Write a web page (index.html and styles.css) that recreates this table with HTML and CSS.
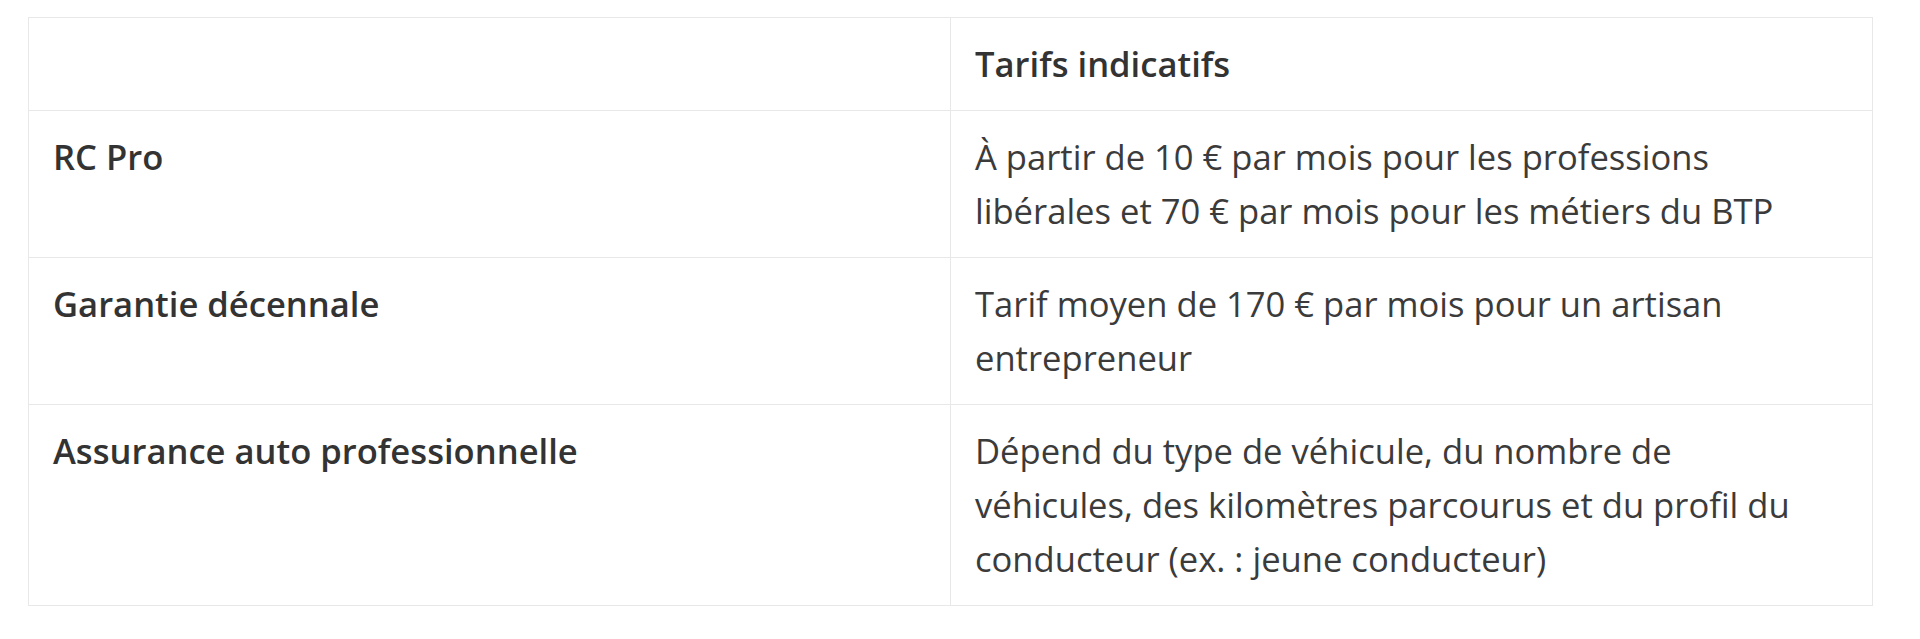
FILE: index.html
```html
<!DOCTYPE html>
<html lang="fr">
<head>
<meta charset="utf-8">
<title>Tarifs indicatifs</title>
<link rel="stylesheet" href="styles.css">
</head>
<body>
<div class="page">
  <table class="tarifs">
    <thead>
      <tr>
        <th></th>
        <th>Tarifs indicatifs</th>
      </tr>
    </thead>
    <tbody>
      <tr>
        <td class="label">RC Pro</td>
        <td>À partir de 10 € par mois pour les professions libérales et 70 € par mois pour les métiers du BTP</td>
      </tr>
      <tr>
        <td class="label">Garantie décennale</td>
        <td>Tarif moyen de 170 € par mois pour un artisan entrepreneur</td>
      </tr>
      <tr>
        <td class="label">Assurance auto professionnelle</td>
        <td>Dépend du type de véhicule, du nombre de véhicules, des kilomètres parcourus et du profil du conducteur (ex. : jeune conducteur)</td>
      </tr>
    </tbody>
  </table>
</div>
</body>
</html>
```
FILE: styles.css
```css
html, body {
  margin: 0;
  padding: 0;
  background: #ffffff;
}
.page {
  padding: 17px 47px 0 28px;
}
.tarifs {
  width: 100%;
  border-collapse: collapse;
  table-layout: fixed;
  font-family: "Open Sans", "Noto Sans", sans-serif;
  font-size: 34.6px;
  line-height: 54px;
  color: #3b3b3b;
}
.tarifs th,
.tarifs td {
  border: 1.5px solid #e8e8e8;
  padding: 19px 60px 19px 24px;
  text-align: left;
  vertical-align: top;
  width: 50%;
}
.tarifs th {
  font-weight: 600;
  color: #333333;
}
.tarifs td {
  font-weight: 400;
}
.tarifs td.label {
  font-weight: 600;
  color: #333333;
}
```
